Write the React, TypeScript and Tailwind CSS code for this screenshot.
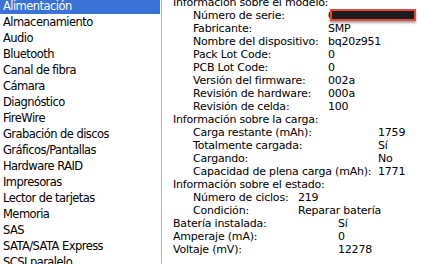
import React from "react";

const sidebar = [
  "Alimentación",
  "Almacenamiento",
  "Audio",
  "Bluetooth",
  "Canal de fibra",
  "Cámara",
  "Diagnóstico",
  "FireWire",
  "Grabación de discos",
  "Gráficos/Pantallas",
  "Hardware RAID",
  "Impresoras",
  "Lector de tarjetas",
  "Memoria",
  "SAS",
  "SATA/SATA Express",
  "SCSI paralelo",
];

function Header({ children }: { children: React.ReactNode }) {
  return <div className="h-[13px] whitespace-nowrap">{children}</div>;
}

function Group({
  rows,
  cols,
  nested,
}: {
  rows: [string, React.ReactNode][];
  cols: string;
  nested?: boolean;
}) {
  return (
    <div className={`grid ${cols} ${nested ? "pl-[20px]" : ""}`}>
      {rows.map(([k, v], i) => (
        <React.Fragment key={i}>
          <div className="h-[13px] whitespace-nowrap">{k}</div>
          <div className="h-[13px] whitespace-nowrap">{v}</div>
        </React.Fragment>
      ))}
    </div>
  );
}

export default function App() {
  return (
    <div
      className="w-[424px] h-[264px] overflow-hidden bg-white flex text-black"
      style={{ fontFamily: '"DejaVu Sans", "Noto Sans", sans-serif' }}
    >
      <div className="w-[160px] shrink-0">
        <div className="-mt-[2px] flex flex-col text-[11.5px] leading-[16px] tracking-[-0.55px]">
          {sidebar.map((s, i) => (
            <div
              key={s}
              className={`h-[16px] pl-[3px] whitespace-nowrap ${
                i === 0 ? "bg-[#3a72d8] text-white" : ""
              }`}
            >
              {s}
            </div>
          ))}
        </div>
      </div>
      <div className="ml-[1px] border-l border-[#b5b5b5] flex-1 min-w-0">
        <div className="-mt-[4px] pl-[11px] text-[11px] leading-[13px] tracking-[-0.2px] flex flex-col">
          <Header>Información sobre el modelo:</Header>
          <Group
            nested
            cols="grid-cols-[135px_auto]"
            rows={[
              [
                "Número de serie:",
                <span className="relative inline-block">
                  C
                  <span className="absolute left-[2px] -top-[0.5px] w-[86px] h-[12.5px] border-2 border-[#e8453c] bg-[#1c1c1c] shadow-[0_2px_2px_rgba(0,0,0,0.35)]" />
                </span>,
              ],
              ["Fabricante:", "SMP"],
              ["Nombre del dispositivo:", "bq20z951"],
              ["Pack Lot Code:", "0"],
              ["PCB Lot Code:", "0"],
              ["Versión del firmware:", "002a"],
              ["Revisión de hardware:", "000a"],
              ["Revisión de celda:", "100"],
            ]}
          />
          <Header>Información sobre la carga:</Header>
          <Group
            nested
            cols="grid-cols-[185px_auto]"
            rows={[
              ["Carga restante (mAh):", "1759"],
              ["Totalmente cargada:", "Sí"],
              ["Cargando:", "No"],
              ["Capacidad de plena carga (mAh):", "1771"],
            ]}
          />
          <Header>Información sobre el estado:</Header>
          <Group
            nested
            cols="grid-cols-[105px_auto]"
            rows={[
              ["Número de ciclos:", "219"],
              ["Condición:", "Reparar batería"],
            ]}
          />
          <Group
            cols="grid-cols-[165px_auto]"
            rows={[
              ["Batería instalada:", "Sí"],
              ["Amperaje (mA):", "0"],
              ["Voltaje (mV):", "12278"],
            ]}
          />
        </div>
      </div>
    </div>
  );
}
